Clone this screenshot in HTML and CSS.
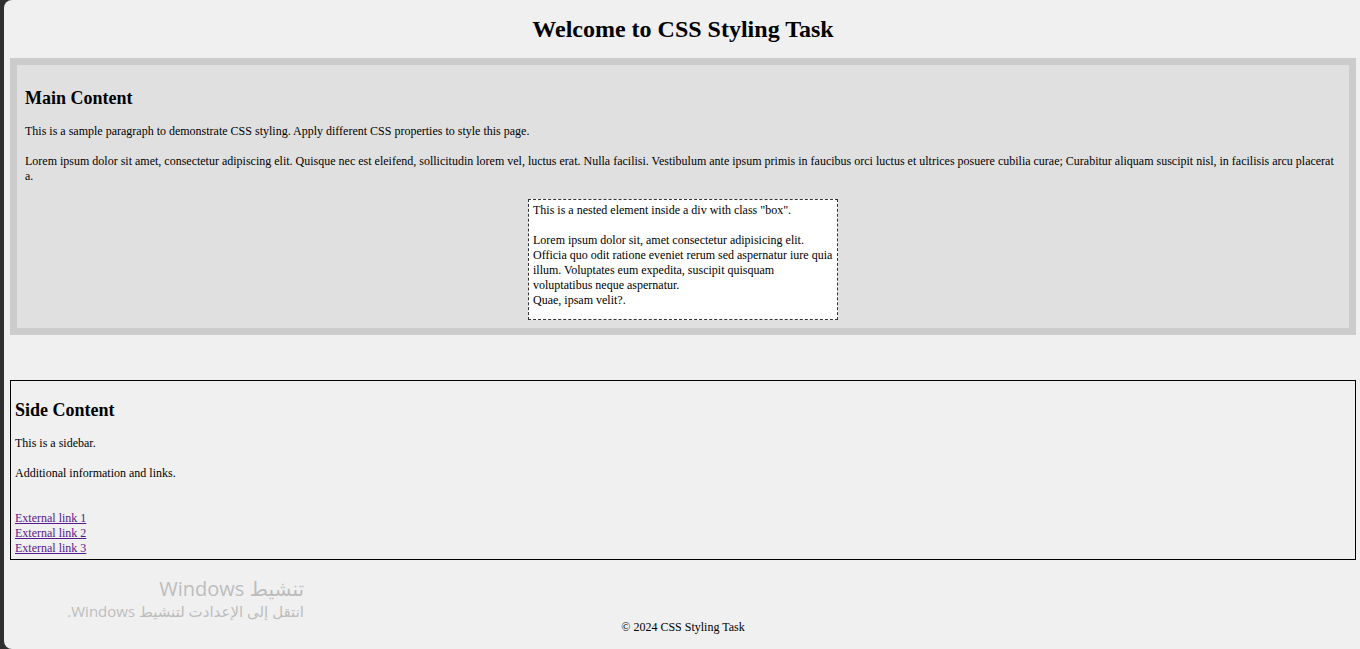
FILE: index.html
```html
<!DOCTYPE html>
<html lang="en">
<head>
<meta charset="utf-8">
<title>CSS Styling Task</title>
<link rel="stylesheet" href="styles.css">
</head>
<body>
<div class="window">
  <header class="site-header">
    <h1>Welcome to CSS Styling Task</h1>
  </header>
  <main class="main-content">
    <h2>Main Content</h2>
    <p>This is a sample paragraph to demonstrate CSS styling. Apply different CSS properties to style this page.</p>
    <p>Lorem ipsum dolor sit amet, consectetur adipiscing elit. Quisque nec est eleifend, sollicitudin lorem vel, luctus erat. Nulla facilisi. Vestibulum ante ipsum primis in faucibus orci luctus et ultrices posuere cubilia curae; Curabitur aliquam suscipit nisl, in facilisis arcu placerat a.</p>
    <div class="box">
      <p class="box-intro">This is a nested element inside a div with class "box".</p>
      <p class="box-text">Lorem ipsum dolor sit, amet consectetur adipisicing elit. Officia quo odit ratione eveniet rerum sed aspernatur iure quia illum. Voluptates eum expedita, suscipit quisquam voluptatibus neque aspernatur.<br>Quae, ipsam velit?.</p>
    </div>
  </main>
  <aside class="side-content">
    <h2>Side Content</h2>
    <p>This is a sidebar.</p>
    <p>Additional information and links.</p>
    <ul class="links">
      <li><a href="#">External link 1</a></li>
      <li><a href="#">External link 2</a></li>
      <li><a href="#">External link 3</a></li>
    </ul>
  </aside>
  <footer class="site-footer">© 2024 CSS Styling Task</footer>
  <div class="activation" dir="rtl">
    <div class="activation-title">تنشيط Windows</div>
    <div class="activation-sub">انتقل إلى الإعدادت لتنشيط Windows.</div>
  </div>
</div>
</body>
</html>
```

FILE: styles.css
```css
html, body {
  margin: 0;
  padding: 0;
  background: #2f2f2f;
}

body {
  font-family: "Liberation Serif", "Times New Roman", serif;
  font-size: 12px;
  line-height: 15px;
  color: #000;
}

.window {
  position: relative;
  margin-left: 4px;
  height: 649px;
  box-sizing: border-box;
  padding: 0 4px 0 6px;
  background: #f0f0f0;
  border-radius: 8px 0 0 8px;
  overflow: hidden;
}

.site-header h1 {
  margin: 15px 0;
  font-size: 24px;
  line-height: 28px;
  font-weight: bold;
  text-align: center;
}

h2 {
  margin: 15px 0;
  font-size: 18px;
  line-height: 21px;
  font-weight: bold;
}

p {
  margin: 15px 0;
}

.main-content {
  display: block;
  background: #e0e0e0;
  border: 7px solid #cccccc;
  padding: 8px 8px 8px;
}

.box {
  box-sizing: border-box;
  width: 310px;
  margin: 15px auto 0;
  padding: 3px 4px 11px;
  background: #ffffff;
  border: 1px dashed #333333;
}

.box .box-intro {
  margin: 0 0 15px;
}

.box .box-text {
  margin: 0;
}

.side-content {
  display: block;
  margin-top: 45px;
  border: 1px solid #000;
  padding: 4px 4px 3px;
}

.links {
  list-style: none;
  margin: 30px 0 0;
  padding: 0;
}

.links a {
  color: #551a8b;
  text-decoration: underline;
}

.site-footer {
  margin-top: 60px;
  text-align: center;
}

.activation {
  position: absolute;
  left: 0;
  top: 575px;
  width: 300px;
  text-align: right;
  font-family: "Open Sans", "DejaVu Sans", sans-serif;
  color: #bdbdbd;
}

.activation-title {
  font-size: 20px;
  line-height: 27px;
}

.activation-sub {
  font-size: 15px;
  line-height: 19px;
}
```
